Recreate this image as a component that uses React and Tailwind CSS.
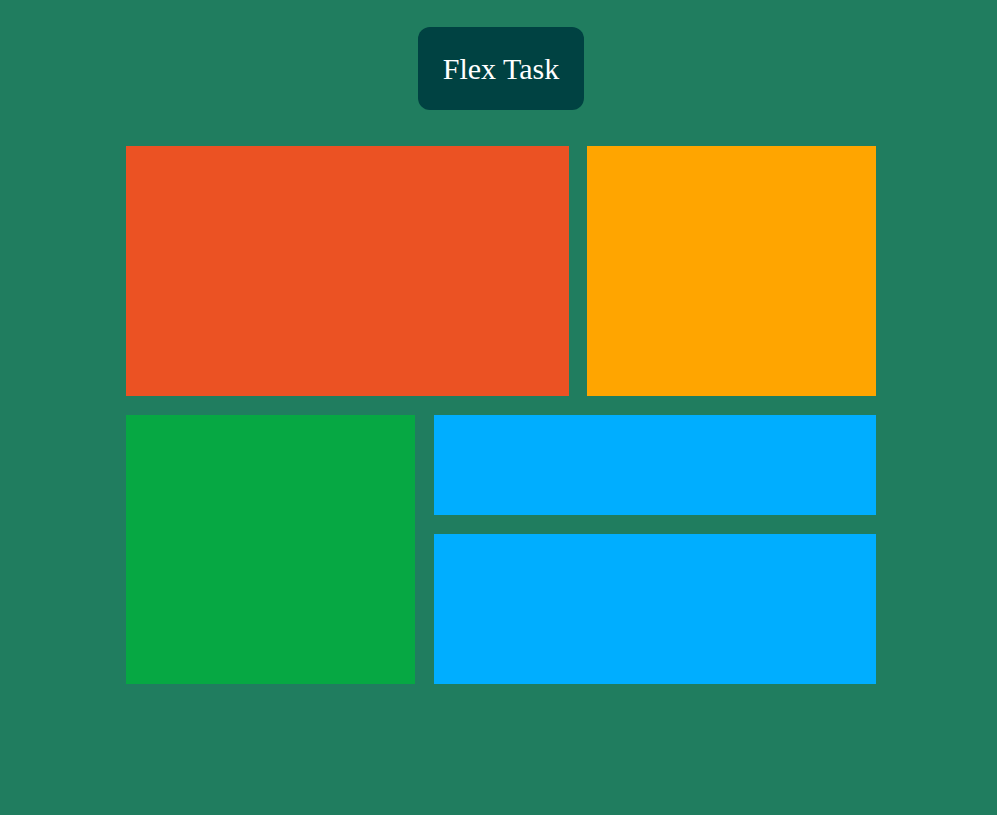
import React from 'react'

function App() {
    return (
        <div className='w-full min-h-screen bg-[#207d5f] pt-[27px]'>
            <div className='ml-[126px] w-[750px] flex flex-col items-center'>
                <div className='w-[166px] h-[83px] bg-[#004242] rounded-[12px] flex items-center justify-center'>
                    <h1 className='text-white text-[30px] leading-[34px] font-["Liberation_Serif",serif]'>Flex Task</h1>
                </div>

                <div className='w-full mt-[36px] flex flex-col gap-[19px]'>
                    <div className='flex gap-[18px] h-[250px]'>
                        <div className='w-[443px] bg-[#eb5223]'></div>
                        <div className='flex-1 bg-[#ffa500]'></div>
                    </div>
                    <div className='flex gap-[19px] h-[269px]'>
                        <div className='w-[289px] bg-[#06a843]'></div>
                        <div className='flex-1 flex flex-col gap-[19px]'>
                            <div className='h-[100px] bg-[#00aeff]'></div>
                            <div className='flex-1 bg-[#00aeff]'></div>
                        </div>
                    </div>
                </div>
            </div>
        </div>
    )
}

export default App
